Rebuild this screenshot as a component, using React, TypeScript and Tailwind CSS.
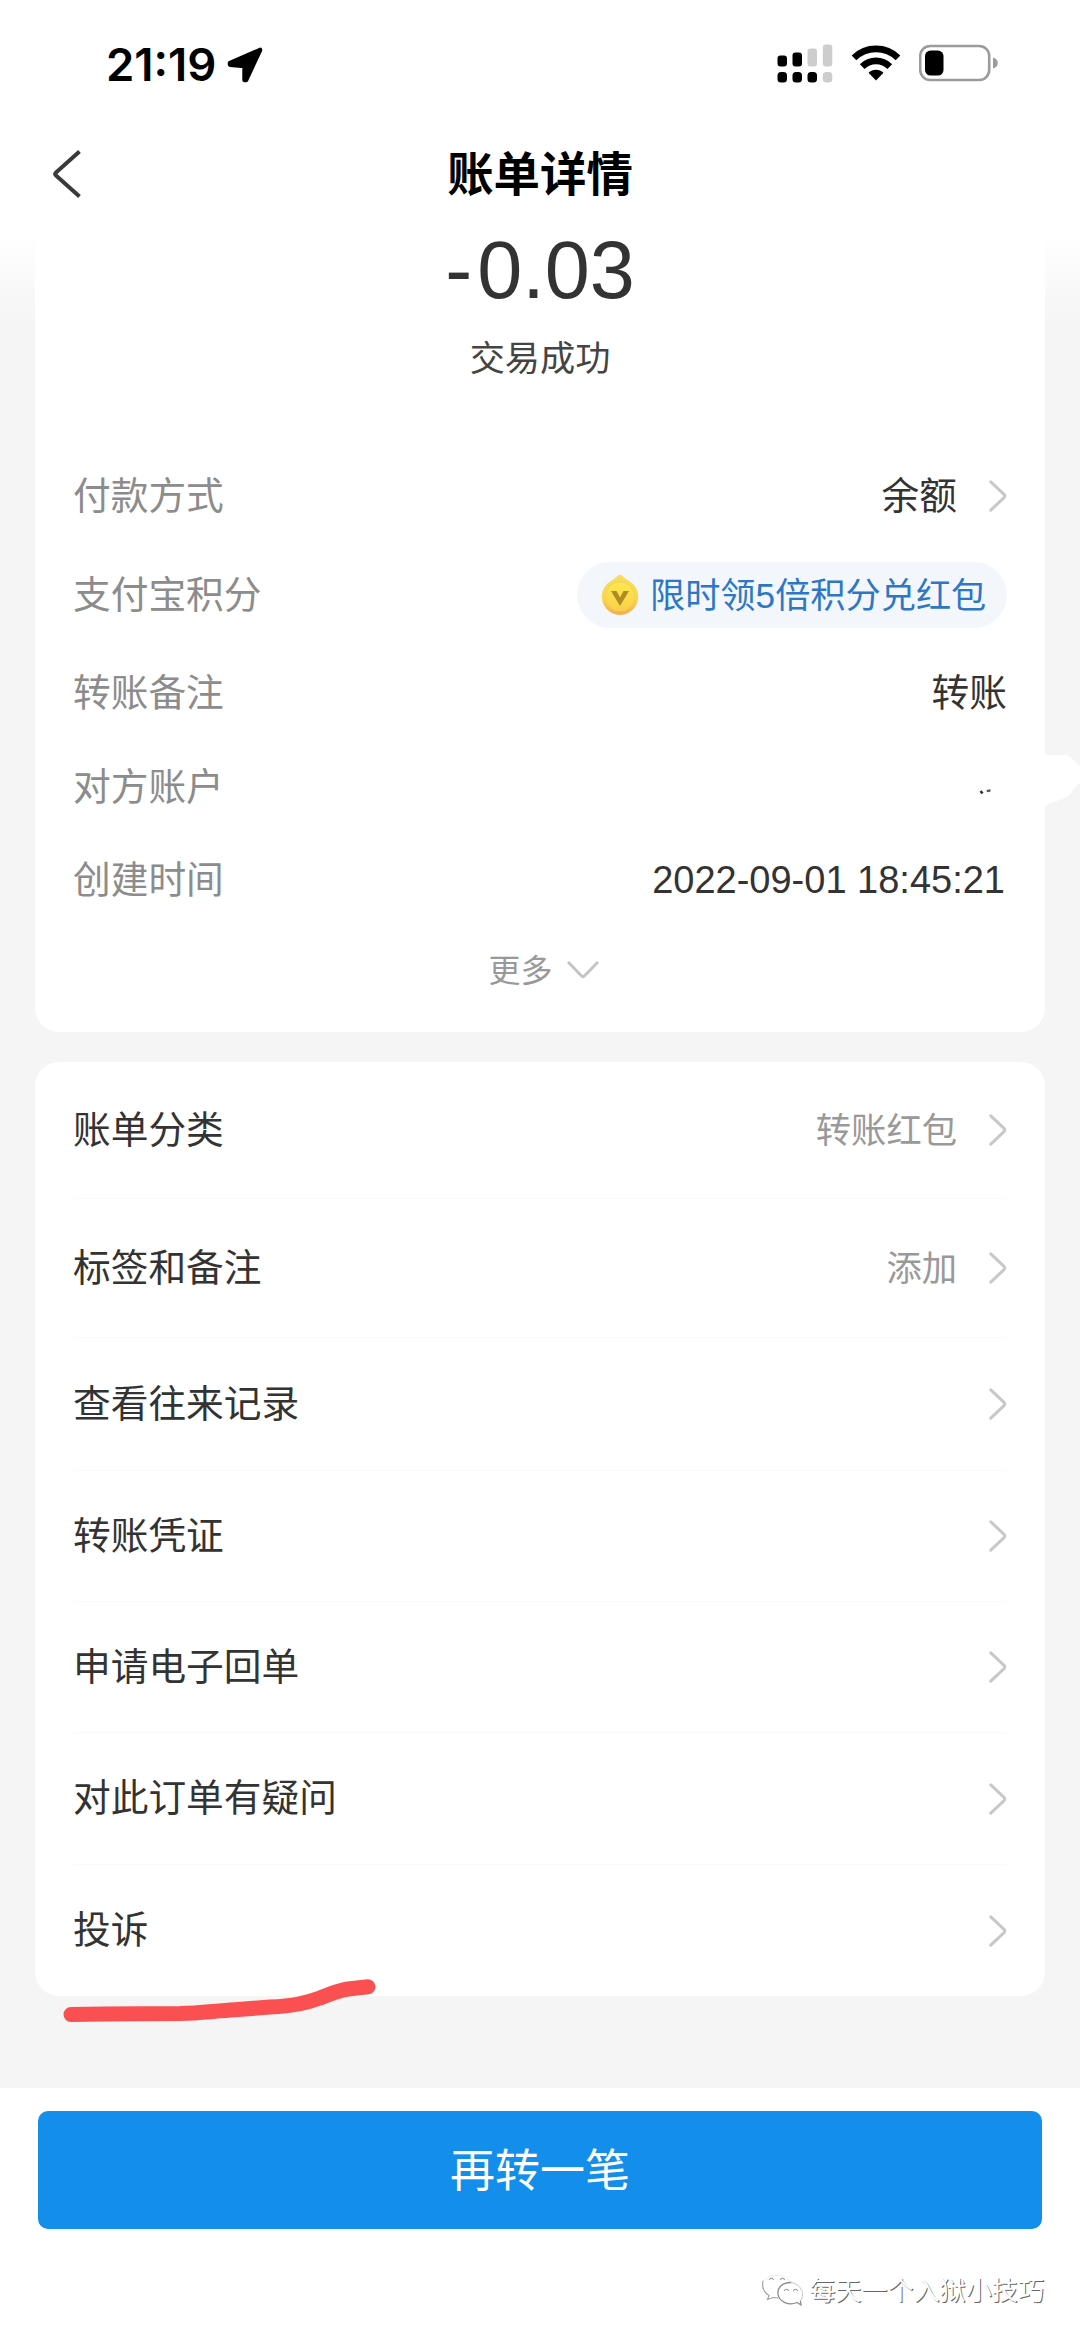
import type { ReactNode } from "react"

const LINKS = [
  { label: "账单分类", value: "转账红包", height: "h-[137px]" },
  { label: "标签和备注", value: "添加", height: "h-[139px]" },
  { label: "查看往来记录", height: "h-[133px]" },
  { label: "转账凭证", height: "h-[131px]" },
  { label: "申请电子回单", height: "h-[131px]" },
  { label: "对此订单有疑问", height: "h-[132px]" },
  { label: "投诉", height: "h-[131px]" },
]

function ChevronRight() {
  return (
    <svg className="ml-8 h-8 w-[18px] shrink-0" viewBox="0 0 18 32" fill="none">
      <path d="M1.8 1.8 L15 14.4 Q16.6 16 15 17.6 L1.8 30.2" stroke="#c8c8c8" strokeWidth="3" strokeLinecap="round" />
    </svg>
  )
}

function StatusBar() {
  return (
    <div className="flex h-[128px] items-start justify-between pr-[81px] pl-[106px]">
      <div className="flex h-[130px] items-center">
        <span className="font-[Inter] text-[45.5px] leading-none font-semibold text-black">21:19</span>
        <svg className="ml-[11px] h-9 w-9" viewBox="0 0 36 36">
          <path
            d="M33 3 L19 33 L17.6 33 L17.6 19 L3 17.6 L3 16.2 Z"
            fill="#000"
            stroke="#000"
            strokeWidth="4.6"
            strokeLinejoin="round"
          />
        </svg>
      </div>
      <div className="flex items-center pt-[43px]">
        <svg className="h-10 w-14" viewBox="0 0 56 40">
          <g fill="#000">
            <rect x="0.5" y="12.5" width="9.5" height="11" rx="3" />
            <rect x="15.5" y="9.5" width="9.5" height="14" rx="3" />
            <rect x="0.5" y="29" width="9.5" height="10.5" rx="3.5" />
            <rect x="15.5" y="29" width="9.5" height="10.5" rx="3.5" />
            <rect x="30.5" y="29" width="9.5" height="10.5" rx="3.5" />
          </g>
          <g fill="#cdcdcd">
            <rect x="30.5" y="5.5" width="9.5" height="18" rx="3" />
            <rect x="45.8" y="1.5" width="9.5" height="22" rx="3" />
            <rect x="45.8" y="29" width="9.5" height="10.5" rx="3.5" />
          </g>
        </svg>
        <svg className="ml-[18px] h-10 w-[50px]" viewBox="0 0 50 40">
          <g fill="none" stroke="#000" strokeWidth="6.6">
            <path d="M3 14.8 A31.5 31.5 0 0 1 47 14.8" />
            <path d="M11.2 23.6 A19.5 19.5 0 0 1 38.8 23.6" />
          </g>
          <path d="M25 37.5 L17.5 29.8 A10.5 10.5 0 0 1 32.5 29.8 Z" fill="#000" />
        </svg>
        <svg className="ml-[18px] h-10 w-20" viewBox="0 0 80 40">
          <rect x="1.2" y="3" width="69" height="34" rx="10" fill="none" stroke="#9b9b9b" strokeWidth="2.6" />
          <rect x="6" y="7.6" width="18.5" height="25" rx="5.5" fill="#000" />
          <path d="M74 14.5 Q78.8 16 78.8 20 Q78.8 24 74 25.5 Z" fill="#9b9b9b" />
        </svg>
      </div>
    </div>
  )
}

function NavBar() {
  return (
    <div className="flex h-[94px] items-center justify-between px-[51px]">
      <svg className="h-[50px] w-8" viewBox="0 0 32 50" fill="none">
        <path d="M28.5 1.5 L5 22.4 Q3.2 24 5 25.6 L28.5 46.5" stroke="#3a3a3a" strokeWidth="4" />
      </svg>
      <h1 className="text-[46.4px] leading-none font-bold text-black">账单详情</h1>
      <div className="w-8"></div>
    </div>
  )
}

function CoinIcon() {
  return (
    <svg className="h-[42px] w-[38px]" viewBox="0 0 38 42">
      <defs>
        <linearGradient id="coin" x1="0" y1="0" x2="0" y2="1">
          <stop offset="0" stopColor="#f6de5c" />
          <stop offset="0.6" stopColor="#fbd54f" />
          <stop offset="1" stopColor="#f2ae4a" />
        </linearGradient>
        <linearGradient id="coinFace" x1="0" y1="0" x2="0" y2="1">
          <stop offset="0" stopColor="#fbea4e" />
          <stop offset="1" stopColor="#fbcf4a" />
        </linearGradient>
      </defs>
      <path
        d="M19 0.5 Q20 0.5 21.5 2 Q25 5.4 28.5 7.2 A18.2 18.2 0 1 1 9.5 7.2 Q13 5.4 16.5 2 Q18 0.5 19 0.5 Z"
        fill="url(#coin)"
      />
      <circle cx="19" cy="22.5" r="14.5" fill="url(#coinFace)" stroke="#f3d060" strokeWidth="1" />
      <path d="M10 17 L15.5 17 L19 23.5 L22.5 17 L28 17 L19 32 Z" fill="#b08a24" />
    </svg>
  )
}

function DetailRow({ label, height, children }: { label: string; height: string; children?: ReactNode }) {
  return (
    <div className={`flex items-center justify-between ${height}`}>
      <span className="pt-[2px] text-[37.7px] leading-none text-[#8c8c8c]">{label}</span>
      <div className="flex items-center text-[37.7px] leading-none text-[#333]">{children}</div>
    </div>
  )
}

function SummaryCard() {
  return (
    <section className="flex h-[810px] flex-col rounded-b-[24px] bg-white pr-[38px] pl-[38px]">
      <div className="h-[97px] pt-[6px] text-center font-['Liberation_Sans'] text-[81px] leading-[84px] text-[#333]">
        <span className="tracking-[5px]">-</span>0.03
      </div>
      <div className="h-[128px] pt-[22px] text-center text-[35.2px] leading-[36px] text-[#444]">交易成功</div>
      <DetailRow label="付款方式" height="h-[98px]">
        <span className="pt-[2px]">余额</span>
        <ChevronRight />
      </DetailRow>
      <DetailRow label="支付宝积分" height="h-[100px]">
        <div className="flex h-[66px] w-[430px] items-center rounded-full bg-[#f3f7fc] pl-6">
          <CoinIcon />
          <span className="ml-[11px] pt-px text-[35.2px] whitespace-nowrap text-[#2d77c4]">
            限时领<span className="font-['Liberation_Sans']">5</span>倍积分兑红包
          </span>
        </div>
      </DetailRow>
      <DetailRow label="转账备注" height="h-[95px]">
        <span className="pt-[2px]">转账</span>
      </DetailRow>
      <DetailRow label="对方账户" height="h-[93px]">
        {/* what is left of the hidden account */}
        <svg className="mt-2 mr-[16px] h-2 w-3" viewBox="0 0 12 8">
          <path d="M1.5 6 L3.6 4.4" stroke="#333" strokeWidth="3.2" />
          <path d="M7.8 4.2 L11.5 3.4" stroke="#555" strokeWidth="2.2" />
        </svg>
      </DetailRow>
      <DetailRow label="创建时间" height="h-[93px]">
        <span className="mr-[2px] font-['Liberation_Sans'] text-[38px]">2022-09-01 18:45:21</span>
      </DetailRow>
      <div className="flex h-[88px] items-center justify-center pl-[7px] text-[32px] leading-none text-[#999]">
        <span className="pt-px">更多</span>
        <svg className="ml-[14px] h-[18px] w-8" viewBox="0 0 32 18" fill="none">
          <path d="M1.8 1.8 L14.4 14.8 Q16 16.4 17.6 14.8 L30.2 1.8" stroke="#c4c4c4" strokeWidth="3" strokeLinecap="round" />
        </svg>
      </div>
    </section>
  )
}

function LinksCard() {
  return (
    <section className="relative mt-[30px] rounded-[24px] bg-white pr-[38px] pl-[38px]">
      {LINKS.map((link, i) => (
        <div
          key={link.label}
          className={`flex items-center ${link.height} ${i < LINKS.length - 1 ? "border-b border-[#fafafa]" : ""}`}
        >
          <span className="flex-1 pt-px text-[37.7px] leading-none text-[#333]">{link.label}</span>
          {link.value && <span className="pt-px text-[35.3px] leading-none text-[#999]">{link.value}</span>}
          <ChevronRight />
        </div>
      ))}
      {/* hand-drawn underline below the last row */}
      <svg className="absolute -bottom-[34px] left-[25px] h-[60px] w-[320px]" viewBox="60 1970 320 60">
        <path
          d="M71 2014.5 L104 2014 L180 2013.6 C200 2013 215 2011 235 2009.8 L270 2007 C294 2006 306 2003 320 1998 C332 1993 338 1990.5 348 1989 L368 1986.8"
          fill="none"
          stroke="#fb5052"
          strokeWidth="15"
          strokeLinecap="round"
          strokeLinejoin="round"
        />
      </svg>
    </section>
  )
}

function Watermark() {
  return (
    <div className="flex items-center justify-end pt-[45px] pr-[36px]">
      <svg className="h-[34px] w-[44px]" viewBox="0 0 44 34" fill="none" strokeLinecap="round">
        <path d="M2 7 C0.5 14 4 19 8 21.5 L6.5 25.5 L12 23.5 L17 24" stroke="#a5a5a5" strokeWidth="1.2" />
        <path d="M4 6 C9 -0.5 24 -1 29 8" stroke="#ececec" />
        <path d="M30 8.5 C21 8.5 16 14 17 20 C18 28 28 32 36 28.5 L40 31 L39.5 27" stroke="#8c8c8c" strokeWidth="1.3" />
        <path d="M30 8.5 C39 9.5 45 19 39.5 27" stroke="#c4c4c4" />
        <path d="M8.5 5.5 q2 -2.5 4 0 M19.5 5.5 q2 -2.5 4 0 M23.5 16.5 q2 -2.5 4 0 M32.5 16.5 q2 -2.5 4 0" stroke="#999" strokeWidth="1.2" />
      </svg>
      <span className="ml-1 text-[26.1px] leading-[34px] text-white [text-shadow:1px_1px_0.5px_#666]">每天一个入狱小技巧</span>
    </div>
  )
}

export default function App() {
  return (
    <div className="flex h-[2338px] w-[1080px] flex-col overflow-hidden bg-white font-['Liberation_Sans','Noto_Sans_CJK_SC',sans-serif]">
      <StatusBar />
      <NavBar />
      <main className="relative h-[1866px] bg-[linear-gradient(to_bottom,#fff_10px,#f5f5f5_100px)] px-[35px]">
        <SummaryCard />
        <LinksCard />
        {/* white smudge over the right margin */}
        <svg className="absolute top-[533px] right-0 h-[52px] w-[36px]" viewBox="0 0 36 52">
          <path d="M0 0 L21 0 C28 1 30 7 36 11 L36 28 C29 32 29 38 24 41 C16 46 8 47 0 51 Z" fill="#fff" />
        </svg>
      </main>
      <footer className="flex-1 bg-white">
        <div className="px-[38px] pt-[23px]">
          <button className="flex h-[118px] w-full items-center justify-center rounded-[10px] bg-[#138eea] pt-[2px] text-[45px] leading-none text-white">
            再转一笔
          </button>
        </div>
        <Watermark />
      </footer>
    </div>
  )
}
